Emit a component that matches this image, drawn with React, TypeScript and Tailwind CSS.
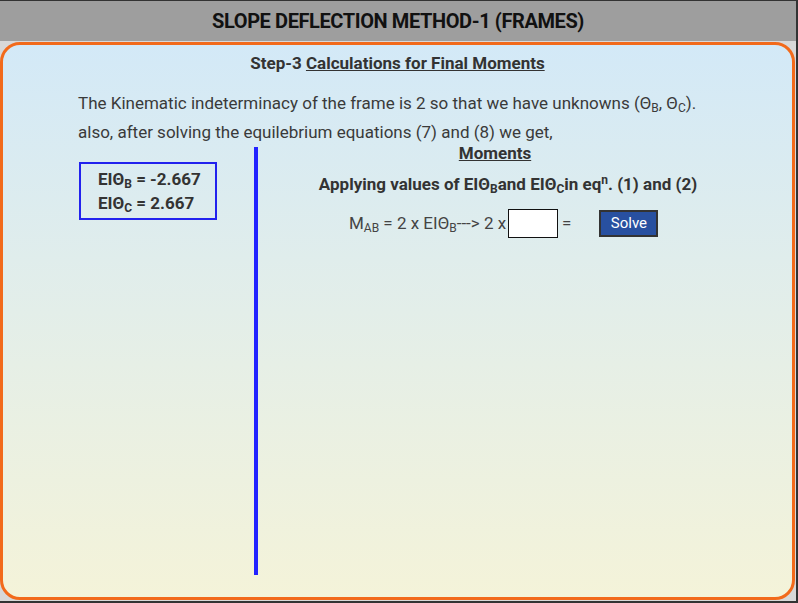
import React from "react";

const Sub = ({ children }: { children: React.ReactNode }) => (
  <sub className="text-[12px]">{children}</sub>
);

export default function App() {
  return (
    <div
      className="w-[798px] h-[603px] bg-[#d8d8d8] border-t border-r-2 border-b-2 border-[#333] flex flex-col overflow-hidden"
      style={{ fontFamily: "Roboto, 'Liberation Sans', sans-serif" }}
    >
      <div className="h-[40px] shrink-0 bg-[#9e9e9e] flex items-center justify-center">
        <h1 className="text-[20px] font-bold text-[#111] tracking-[-0.4px]">
          SLOPE DEFLECTION METHOD-1 (FRAMES)
        </h1>
      </div>
      <div className="mt-[1px] mr-[1px] h-[558px] rounded-[20px] border-[3px] border-[#f26a1b] bg-gradient-to-b from-[#d3e9f7] to-[#f4f3d9] flex flex-col text-[#333]">
        <div className="pt-[8px] text-center text-[17px] font-bold leading-[20px]">
          Step-3 <span className="underline">Calculations for Final Moments</span>
        </div>
        <div className="mt-[16px] pl-[75px] text-[17px] leading-[29px] text-[#3a3a3a]">
          <p>
            The Kinematic indeterminacy of the frame is 2 so that we have unknowns (Θ<Sub>B</Sub>, Θ<Sub>C</Sub>).
          </p>
          <p>also, after solving the equilebrium equations (7) and (8) we get,</p>
        </div>
        <div className="flex pl-[76px]">
          <div className="w-[175px] pt-[15px]">
            <div className="w-[138px] h-[58px] border-2 border-[#2222ee] py-[3px] pl-[17px] text-[17px] font-bold leading-[24px]">
              <div>
                EIΘ<Sub>B</Sub> = -2.667
              </div>
              <div>
                EIΘ<Sub>C</Sub> = 2.667
              </div>
            </div>
          </div>
          <div className="w-[4px] h-[428px] bg-[#2222ff]" />
          <div className="w-[474px] flex flex-col">
            <div className="-mt-[2px] text-center text-[17px] font-bold leading-[16px] underline">Moments</div>
            <div className="mt-[13px] pl-[26px] text-center text-[17px] font-bold leading-[20px]">
              Applying values of EIΘ<Sub>B</Sub>and EIΘ<Sub>C</Sub>in eq<sup className="text-[12px]">n</sup>. (1) and (2)
            </div>
            <div className="mt-[15px] pl-[91px] flex items-center text-[17px] text-[#444] h-[29px]">
              <span>
                M<Sub>AB</Sub> = 2 x EIΘ<Sub>B</Sub>---&gt; 2 x
              </span>
              <div className="ml-[2px] w-[50px] h-[29px] bg-white border border-[#111]" />
              <span className="ml-[4px]">=</span>
              <button className="ml-[28px] w-[59px] h-[27px] bg-[#2850a0] border-2 border-[#333] text-white text-[15px] flex items-center justify-center">
                Solve
              </button>
            </div>
          </div>
        </div>
      </div>
    </div>
  );
}
